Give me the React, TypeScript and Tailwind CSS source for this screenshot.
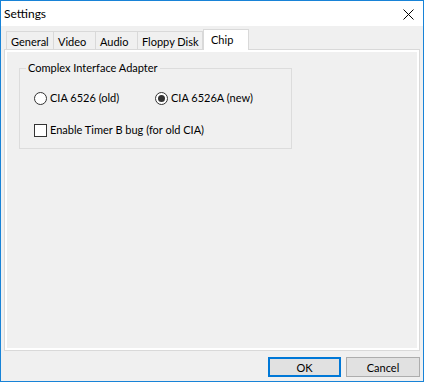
import React from "react";

const font = { fontFamily: 'Lato, "Noto Sans", Arial, sans-serif' };

function Tab({ label, w, selected }: { label: string; w: number; selected?: boolean }) {
  if (selected) {
    return (
      <div
        className="relative z-10 -mb-px flex h-[21px] items-start whitespace-nowrap border border-b-0 border-[#d9d9d9] bg-white pl-[7px] pt-[2px] text-[11px] leading-[16px] text-black"
        style={{ width: w }}
      >
        {label}
      </div>
    );
  }
  return (
    <div
      className="flex h-[18px] items-start whitespace-nowrap border border-b-0 border-l-0 border-[#d9d9d9] bg-[#f0f0f0] pl-[4px] pt-[2px] text-[11px] leading-[16px] text-black first:border-l"
      style={{ width: w }}
    >
      {label}
    </div>
  );
}

export default function App() {
  return (
    <div
      className="flex h-[382px] w-[424px] flex-col border border-[#1883d7] bg-[#f0f0f0] text-[11px] text-black"
      style={font}
    >
      {/* Title bar */}
      <div className="flex h-[25px] items-center justify-between bg-white pl-[3px] pr-[9px]">
        <span className="text-[12px] leading-none">Settings</span>
        <svg width="11" height="11" viewBox="0 0 11 11" className="mt-[1px]">
          <path d="M0.5 0.5 L10.5 10.5 M10.5 0.5 L0.5 10.5" stroke="#000" strokeWidth="1" />
        </svg>
      </div>

      {/* Tabs */}
      <div className="ml-[5px] mt-[3px] flex h-[20px] items-end">
        <Tab label="General" w={48} />
        <Tab label="Video" w={42} />
        <Tab label="Audio" w={42} />
        <Tab label="Floppy Disk" w={65} />
        <Tab label="Chip" w={46} selected />
      </div>

      {/* Panel */}
      <div className="mx-[3px] h-[302px] border border-[#d9d9d9] bg-white p-[2px]">
        <div className="h-full bg-[#f0f0f0] pl-[12px] pt-[16px]">
          <div className="relative h-[81px] w-[273px] border border-[#dcdcdc]">
            <span className="absolute -top-[9px] left-[6px] whitespace-nowrap bg-[#f0f0f0] px-[2px] leading-[16px]">
              Complex Interface Adapter
            </span>
            <div className="ml-[14px] mt-[21px] flex items-center">
              <div className="flex w-[121px] items-center">
                <span className="h-[13px] w-[13px] rounded-full border border-[#333] bg-white" />
                <span className="ml-[3px] whitespace-nowrap leading-[16px]">CIA 6526 (old)</span>
              </div>
              <div className="flex items-center">
                <span className="flex h-[13px] w-[13px] items-center justify-center rounded-full border border-[#333] bg-white">
                  <span className="h-[7px] w-[7px] rounded-full bg-[#333]" />
                </span>
                <span className="ml-[3px] whitespace-nowrap leading-[16px]">CIA 6526A (new)</span>
              </div>
            </div>
            <div className="ml-[14px] mt-[16px] flex items-center">
              <span className="h-[13px] w-[13px] border border-[#333] bg-white" />
              <span className="ml-[3px] whitespace-nowrap leading-[16px]">Enable Timer B bug (for old CIA)</span>
            </div>
          </div>
        </div>
      </div>

      {/* Buttons */}
      <div className="mr-[3px] mt-[6px] flex justify-end gap-[5px]">
        <button className="flex h-[20px] w-[73px] items-center justify-center border-2 border-[#0078d7] bg-[#e1e1e1] text-[11px] leading-none">
          OK
        </button>
        <button className="flex h-[20px] w-[74px] items-center justify-center border border-[#adadad] bg-[#e1e1e1] text-[11px] leading-none">
          Cancel
        </button>
      </div>
    </div>
  );
}
